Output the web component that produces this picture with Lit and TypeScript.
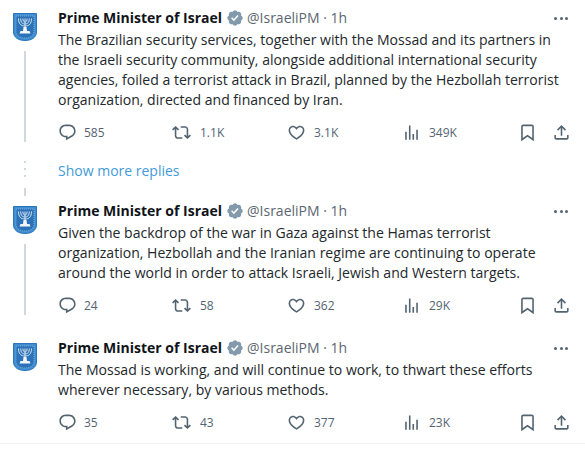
import { LitElement, html, css, svg } from "lit";
import { customElement } from "lit/decorators.js";

const crest = svg`<svg class="crest" viewBox="0 0 24 28" aria-hidden="true">
  <path d="M0.5 0.5H23.5V19C23.5 24 19 27.5 12 27.5C5 27.5 0.5 24 0.5 19Z" fill="#3f8dcf" stroke="#2a76bd" stroke-width="1"/>
  <path d="M3 3H21V18.5C21 22.5 17.5 25 12 25C6.5 25 3 22.5 3 18.5Z" fill="#2b72b8" stroke="#8fbfe3" stroke-width="0.8" stroke-dasharray="1 1"/>
  <g fill="none" stroke="#d5e4f1" stroke-width="1">
    <path d="M12 5.5V18"/>
    <path d="M5.5 5.5C5.5 11 8 13 12 13C16 13 18.5 11 18.5 5.5"/>
    <path d="M7.7 5.5C7.7 9.5 9.5 11 12 11C14.5 11 16.3 9.5 16.3 5.5"/>
    <path d="M9.9 5.5C9.9 8 10.8 9 12 9C13.2 9 14.1 8 14.1 5.5"/>
  </g>
  <path d="M10.5 14H13.5L14 18H16.5L17.5 20.5H6.5L7.5 18H10Z" fill="#f2f6fa"/>
</svg>`;

const badge = svg`<svg class="badge" viewBox="0 0 22 22" aria-hidden="true"><path fill="#829aab" d="M20.396 11c-.018-.646-.215-1.275-.57-1.816-.354-.54-.852-.972-1.438-1.246.223-.607.27-1.264.14-1.897-.131-.634-.437-1.218-.882-1.687-.47-.445-1.053-.75-1.687-.882-.633-.13-1.29-.083-1.897.14-.273-.587-.704-1.086-1.245-1.44S11.647 1.62 11 1.604c-.646.017-1.273.213-1.813.568s-.969.854-1.24 1.44c-.608-.223-1.267-.272-1.902-.14-.635.13-1.22.436-1.69.882-.445.47-.749 1.055-.878 1.688-.13.633-.08 1.29.144 1.896-.587.274-1.087.705-1.443 1.245-.356.54-.555 1.17-.574 1.817.02.647.218 1.276.574 1.817.356.54.856.972 1.443 1.245-.224.606-.274 1.263-.144 1.896.13.634.433 1.218.877 1.688.47.443 1.054.747 1.687.878.633.132 1.29.084 1.897-.136.274.586.705 1.084 1.246 1.439.54.354 1.17.551 1.816.569.647-.016 1.276-.213 1.817-.567s.972-.854 1.245-1.44c.604.239 1.266.296 1.903.164.636-.132 1.22-.447 1.68-.907.46-.46.776-1.044.908-1.681s.075-1.299-.165-1.903c.586-.274 1.084-.705 1.439-1.246.354-.54.551-1.17.569-1.816z"/><path fill="#fff" d="M9.662 14.85l-3.429-3.428 1.293-1.302 2.072 2.072 4.4-4.794 1.347 1.246z"/></svg>`;

const ic = (d: unknown) => svg`<svg class="ic" viewBox="0 0 24 24" aria-hidden="true"><path d=${d as string}/></svg>`;
const icons = {
  reply: "M1.751 10c0-4.42 3.584-8 8.005-8h4.366c4.49 0 8.129 3.64 8.129 8.13 0 2.96-1.607 5.68-4.196 7.11l-8.054 4.46v-3.69h-.067c-4.49.1-8.183-3.51-8.183-8.01zm8.005-6c-3.317 0-6.005 2.69-6.005 6 0 3.37 2.77 6.08 6.138 6.01l.351-.01h1.761v2.3l5.087-2.81c1.951-1.08 3.163-3.13 3.163-5.36 0-3.39-2.744-6.13-6.129-6.13H9.756z",
  retweet: "M4.5 3.88l4.432 4.14-1.364 1.46L5.5 7.55V16c0 1.1.896 2 2 2H13v2H7.5c-2.209 0-4-1.79-4-4V7.55L1.432 9.48.068 8.02 4.5 3.88zM16.5 6H11V4h5.5c2.209 0 4 1.79 4 4v8.45l2.068-1.93 1.364 1.46-4.432 4.14-4.432-4.14 1.364-1.46 2.068 1.93V8c0-1.1-.896-2-2-2z",
  like: "M16.697 5.5c-1.222-.06-2.679.51-3.89 2.16l-.805 1.09-.806-1.09C9.984 6.01 8.526 5.44 7.304 5.5c-1.243.07-2.349.78-2.91 1.91-.552 1.12-.633 2.78.479 4.82 1.074 1.97 3.257 4.27 7.129 6.61 3.87-2.34 6.052-4.64 7.126-6.61 1.111-2.04 1.03-3.7.477-4.82-.561-1.13-1.666-1.84-2.908-1.91zm4.187 7.69c-1.351 2.48-4.001 5.12-8.379 7.67l-.503.3-.504-.3c-4.379-2.55-7.029-5.19-8.382-7.67-1.36-2.5-1.41-4.86-.514-6.67.887-1.79 2.647-2.91 4.601-3.01 1.651-.09 3.368.56 4.798 2.01 1.429-1.45 3.146-2.1 4.796-2.01 1.954.1 3.714 1.22 4.601 3.01.896 1.81.846 4.17-.514 6.67z",
  views: "M8.75 21V3h2v18h-2zM18 21V8.5h2V21h-2zM4 21l.004-10h2L6 21H4zm9.248 0v-7h2v7h-2z",
  bookmark: "M4 4.5C4 3.12 5.119 2 6.5 2h11C18.881 2 20 3.12 20 4.5v18.44l-8-5.71-8 5.71V4.5zM6.5 4c-.276 0-.5.22-.5.5v14.56l6-4.29 6 4.29V4.5c0-.28-.224-.5-.5-.5h-11z",
  share: "M12 2.59l5.7 5.7-1.41 1.42L13 6.41V16h-2V6.41l-3.3 3.3-1.41-1.42L12 2.59zM21 15l-.02 3.51c0 1.38-1.12 2.49-2.5 2.49H5.5C4.11 21 3 19.88 3 18.5V15h2v3.5c0 .28.22.5.5.5h12.98c.28 0 .5-.22.5-.5L19 15h2z",
};

interface Tweet { lines: string[]; counts: string[]; thread: boolean; }

const tweets: Tweet[] = [
  {
    lines: [
      "The Brazilian security services, together with the Mossad and its partners in",
      "the Israeli security community, alongside additional international security",
      "agencies, foiled a terrorist attack in Brazil, planned by the Hezbollah terrorist",
      "organization, directed and financed by Iran.",
    ],
    counts: ["585", "1.1K", "3.1K", "349K"],
    thread: true,
  },
  {
    lines: [
      "Given the backdrop of the war in Gaza against the Hamas terrorist",
      "organization, Hezbollah and the Iranian regime are continuing to operate",
      "around the world in order to attack Israeli, Jewish and Western targets.",
    ],
    counts: ["24", "58", "362", "29K"],
    thread: true,
  },
  {
    lines: [
      "The Mossad is working, and will continue to work, to thwart these efforts",
      "wherever necessary, by various methods.",
    ],
    counts: ["35", "43", "377", "23K"],
    thread: false,
  },
];

@customElement("app-root")
export class AppRoot extends LitElement {
  static styles = css`
    :host {
      display: block;
      width: 585px;
      height: 452px;
      overflow: hidden;
      background: #fff;
      font-family: "Open Sans", "Noto Sans", sans-serif;
      color: #1d2327;
    }
    .tweet {
      display: grid;
      grid-template-columns: 58px 1fr;
      padding-right: 15px;
    }
    .tweet.t1 { padding-top: 8px; padding-bottom: 13px; }
    .tweet.t2 { padding-top: 1px; padding-bottom: 17px; }
    .tweet.t3 { padding-top: 6px; padding-bottom: 11px; border-bottom: 1px solid #eff3f4; }
    .rail {
      display: flex;
      flex-direction: column;
      align-items: center;
      width: 50px;
    }
    .crest { width: 24px; height: 28px; margin-top: 5px; flex: none; }
    .line { width: 2px; flex: 1; margin-top: 10px; background: #cfd9de; }
    .head {
      display: flex;
      align-items: center;
      height: 20px;
      font-size: 14px;
      line-height: 20px;
    }
    .name { font-weight: 700; color: #0f1419; }
    .badge { width: 18px; height: 18px; margin: 0 3px 0 4px; }
    .handle { color: #5b6670; }
    .more { margin-left: auto; padding-right: 2px; display: flex; gap: 2.5px; }
    .more i { width: 3px; height: 3px; border-radius: 50%; background: #536471; }
    .body { font-size: 14.05px; line-height: 20px; margin-top: 2px; color: #22282c; white-space: nowrap; }
    .actions {
      display: grid;
      grid-template-columns: 114px 115px 115px 116px 34px 18px;
      align-items: center;
      height: 20px;
      margin-top: 12px;
    }
    .action { display: flex; align-items: center; font-size: 12px; color: #536471; }
    .ic { width: 19px; height: 19px; fill: #536471; flex: none; }
    .action span { margin-left: 7px; }
    .action.wide span { margin-left: 8px; }
    .action.rt span { margin-left: 9px; }
    .dots {
      display: grid;
      grid-template-columns: 58px 1fr;
      height: 45px;
    }
    .dotted {
      width: 50px;
      display: flex;
      flex-direction: column;
      align-items: center;
      gap: 5px;
      padding-top: 6px;
      box-sizing: border-box;
    }
    .dotted i { width: 2px; height: 2px; background: #cfd9de; }
    .dotted i.dash { height: 8px; margin-top: 6px; }
    .show { font-size: 14px; line-height: 20px; padding-top: 6px; color: #3f9bd9; }
  `;

  private actions(c: string[]) {
    return html`<div class="actions">
      <div class="action">${ic(icons.reply)}<span>${c[0]}</span></div>
      <div class="action rt">${ic(icons.retweet)}<span>${c[1]}</span></div>
      <div class="action wide">${ic(icons.like)}<span>${c[2]}</span></div>
      <div class="action wide">${ic(icons.views)}<span>${c[3]}</span></div>
      <div class="action">${ic(icons.bookmark)}</div>
      <div class="action">${ic(icons.share)}</div>
    </div>`;
  }

  private tweet(t: Tweet, i: number) {
    return html`<article class="tweet t${i + 1}">
      <div class="rail">${crest}${t.thread ? html`<div class="line"></div>` : ""}</div>
      <div>
        <div class="head">
          <span class="name">Prime Minister of Israel</span>${badge}
          <span class="handle">@IsraeliPM · 1h</span>
          <span class="more"><i></i><i></i><i></i></span>
        </div>
        <div class="body">${t.lines.map((l) => html`<div>${l}</div>`)}</div>
        ${this.actions(t.counts)}
      </div>
    </article>`;
  }

  render() {
    return html`
      ${this.tweet(tweets[0], 0)}
      <div class="dots">
        <div class="dotted"><i></i><i></i><i></i><i class="dash"></i></div>
        <div class="show">Show more replies</div>
      </div>
      ${this.tweet(tweets[1], 1)}
      ${this.tweet(tweets[2], 2)}
    `;
  }
}
